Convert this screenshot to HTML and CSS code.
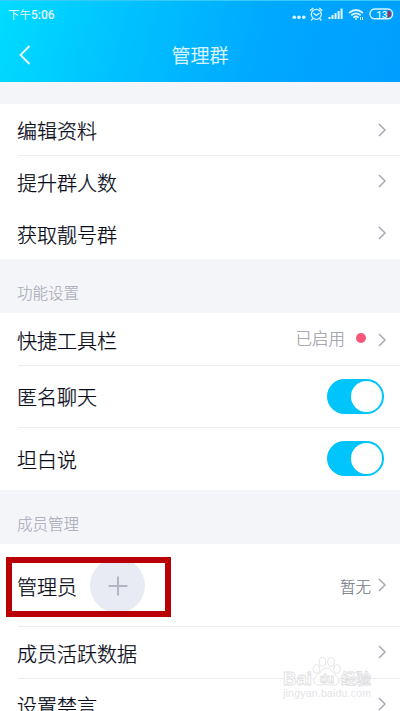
FILE: index.html
```html
<!DOCTYPE html>
<html lang="zh-CN">
<head>
<meta charset="utf-8">
<title>管理群</title>
<link rel="stylesheet" href="styles.css">
</head>
<body>
<div class="screen">
  <header class="header">
    <div class="status">
      <span class="time">下午<b>5:06</b></span>
      <svg class="status-icons" width="108" height="20" viewBox="0 0 108 20" fill="none" stroke="#d8f5ff">
        <g fill="#d8f5ff" stroke="none"><circle cx="5.300" cy="12.200" r="1.800"/><circle cx="10" cy="12.200" r="1.800"/><circle cx="14.800" cy="12.200" r="1.800"/></g>
        <g stroke-width="1.300" stroke-linecap="round"><circle cx="27.300" cy="9.300" r="5"/><path d="M24.900 8.400l2.400 2 2.700-2M21.500 5.300l2.500-2M33 5.300l-2.500-2M23.500 13.800l-1 1.200M31 13.800l1 1.200"/></g>
        <path stroke-width="2.100" d="M40.500 14v-2M43.500 14v-4M46.500 14V8M49.600 14V6M52.600 14V3.500"/>
        <g stroke-width="1.700"><path d="M60 8q7-6 14 0M62.200 10.400q4.800-4 9.600 0M64.300 12.600q2.700-2.200 5.400 0"/><circle cx="67" cy="14" r=".9" fill="#d8f5ff" stroke="none"/><path stroke-width="1" d="M71.500 12v3M73.500 12v3"/></g>
        <rect x="81" y="4" width="22.600" height="9.800" rx="4.700" stroke-width="1.400"/>
        <path d="M98.800 5.400v7q3.300-.3 3.300-3.500t-3.300-3.500z" fill="#a02c61" stroke="none"/>
        <text class="battery-text" x="87.500" y="12.500">13</text>
      </svg>
    </div>
    <div class="nav">
      <svg class="back" width="12" height="20" viewBox="0 0 12 20"><path d="M10.500 1L1.500 10l9 9"/></svg>
      <h1>管理群</h1>
    </div>
  </header>
  <main>
    <div class="gap"></div>
    <section class="group">
      <div class="row"><span class="label">编辑资料</span><svg class="chevron" viewBox="0 0 8 14"><path d="M1 1l6 6-6 6"/></svg></div>
      <div class="row"><span class="label">提升群人数</span><svg class="chevron" viewBox="0 0 8 14"><path d="M1 1l6 6-6 6"/></svg></div>
      <div class="row"><span class="label">获取靓号群</span><svg class="chevron" viewBox="0 0 8 14"><path d="M1 1l6 6-6 6"/></svg></div>
    </section>
    <h2>功能设置</h2>
    <section class="group">
      <div class="row"><span class="label">快捷工具栏</span><span class="value enabled">已启用</span><span class="dot"></span><svg class="chevron" viewBox="0 0 8 14"><path d="M1 1l6 6-6 6"/></svg></div>
      <div class="row toggle-row line"><span class="label">匿名聊天</span><span class="toggle"></span></div>
      <div class="row toggle-row line last"><span class="label">坦白说</span><span class="toggle"></span></div>
    </section>
    <h2>成员管理</h2>
    <section class="group">
      <div class="row admin-row"><span class="label">管理员</span><span class="add"><svg width="20" height="20" viewBox="0 0 20 20"><path d="M10 .5v19M.5 10h19"/></svg></span><span class="value">暂无</span><svg class="chevron" viewBox="0 0 8 14"><path d="M1 1l6 6-6 6"/></svg><span class="highlight"></span></div>
      <div class="row line"><span class="label">成员活跃数据</span><svg class="chevron" viewBox="0 0 8 14"><path d="M1 1l6 6-6 6"/></svg></div>
      <div class="row line"><span class="label">设置禁言</span><svg class="chevron" viewBox="0 0 8 14"><path d="M1 1l6 6-6 6"/></svg></div>
    </section>
  </main>
  <svg class="watermark" width="94" height="46" viewBox="0 0 94 46">
    <g class="mark">
      <text class="brand" x="2" y="28.500" textLength="29" lengthAdjust="spacingAndGlyphs">Bai</text>
      <path d="M45.500 12q-4 0-6 4l-5 5q-3 3-1 6t6 2q6-1 12 0 4 1 6-2t-1-6l-5-5q-2-4-6-4z"/>
      <ellipse cx="35.500" cy="13" rx="3.300" ry="4.300"/><ellipse cx="41.500" cy="6" rx="3.300" ry="4.500"/><ellipse cx="50" cy="6" rx="3.300" ry="4.500"/><ellipse cx="56" cy="13" rx="3.300" ry="4.300"/>
      <text class="du" x="38.500" y="26.500">du</text>
      <text class="brand-cn" x="60" y="28" textLength="30">经验</text>
    </g>
    <text class="site" x="2" y="41" textLength="88">jingyan.baidu.com</text>
  </svg>
</div>
</body>
</html>
```
FILE: styles.css
```css
* { box-sizing: border-box; }
body { margin: 0; font-family: "Noto Sans CJK SC", sans-serif; background: #fff; }
.screen { position: relative; width: 400px; height: 711px; overflow: hidden; background: #fff; }
.header {
  height: 82px;
  color: #e4f8ff;
  background: linear-gradient(105deg, #00dcff 0%, #00c4ff 28%, #00a8ff 66%, #009eff 100%);
  border-top: 1px solid #36cbf6;
}
.status { display: flex; justify-content: space-between; height: 28px; padding: 4px 3px 0 8px; }
.time { font-size: 11.500px; line-height: 18px; }
.time b { font-family: Roboto, sans-serif; font-weight: 500; font-size: 12px; }
.battery-text { font: 500 9.500px Roboto, sans-serif; fill: #e4f8ff; stroke: none; }
.nav { display: grid; grid-template-columns: 20px 1fr 20px; align-items: center; height: 52px; padding: 0 19px; }
.back { fill: none; stroke: #e4f8ff; stroke-width: 2; }
h1 { margin: 0; font-size: 19px; font-weight: 300; line-height: 28px; text-align: center; -webkit-text-stroke: .3px; }
.gap { height: 22px; background: #f4f5f9; }
.row { position: relative; display: flex; align-items: center; height: 52px; padding: 1px 14px 0 17px; }
.row:first-child { height: 51px; }
.row:first-child + .row::before, .line::before {
  content: ""; position: absolute; top: 0; left: 18px; right: 0; height: 1px; background: #ededf1;
}
.label { margin-right: auto; padding-top: 2px; font-size: 20px; font-weight: 300; line-height: 30px; color: #080b18; -webkit-text-stroke: .25px; }
.chevron { width: 8px; height: 14px; flex: none; margin-top: -1px; fill: none; stroke: #a6a8b3; stroke-width: 1.500; }
h2 { height: 54px; margin: 0; padding: 21px 17px 0; background: #f4f5f9; color: #a9acb8; font-size: 15.500px; font-weight: 300; line-height: 25px; -webkit-text-stroke: .15px; }
h2 + .group .row:first-child { height: 52px; padding-top: 2px; }
.value { margin: 0 7px 0 0; font-size: 15.500px; font-weight: 300; line-height: 24px; color: #737785; -webkit-text-stroke: .15px; }
.enabled { margin: -4px 11px 0 0; font-size: 16.500px; color: #9a9ca8; }
.dot { width: 10px; height: 10px; margin: -4px 12px 0 0; border-radius: 50%; background: #f7577a; }
.group .toggle-row { height: 62px; padding: 0 16px 0 17px; }
.group .toggle-row.last { height: 63px; }
.toggle { display: flex; justify-content: flex-end; width: 57px; height: 35px; padding: 2px; border-radius: 18px; background: #00c4fc; }
.toggle::after { content: ""; width: 31px; height: 31px; border-radius: 50%; background: #fff; }
h2 + .group .admin-row:first-child { height: 82px; padding-top: 1px; }
.admin-row .label { margin-right: 13px; }
.add { display: flex; align-items: center; justify-content: center; width: 55px; height: 55px; margin-right: auto; border-radius: 50%; background: #e8ebf4; }
.add path { stroke: #b3b6c2; stroke-width: 2; }
.highlight { position: absolute; left: 6px; top: 13px; width: 165px; height: 60px; border: 6px solid #b90005; }
.watermark { position: absolute; left: 281px; top: 656px; }
.mark { fill: #fff; stroke: #dedee1; stroke-width: .8; }
.brand { font: 700 19px "Liberation Sans", sans-serif; }
.du { font: 700 12px "Liberation Sans", sans-serif; }
.brand-cn { font: 700 15px "Noto Sans CJK SC", sans-serif; }
.site { font: 10.500px "Liberation Sans", sans-serif; fill: #e4e4e7; }
```
